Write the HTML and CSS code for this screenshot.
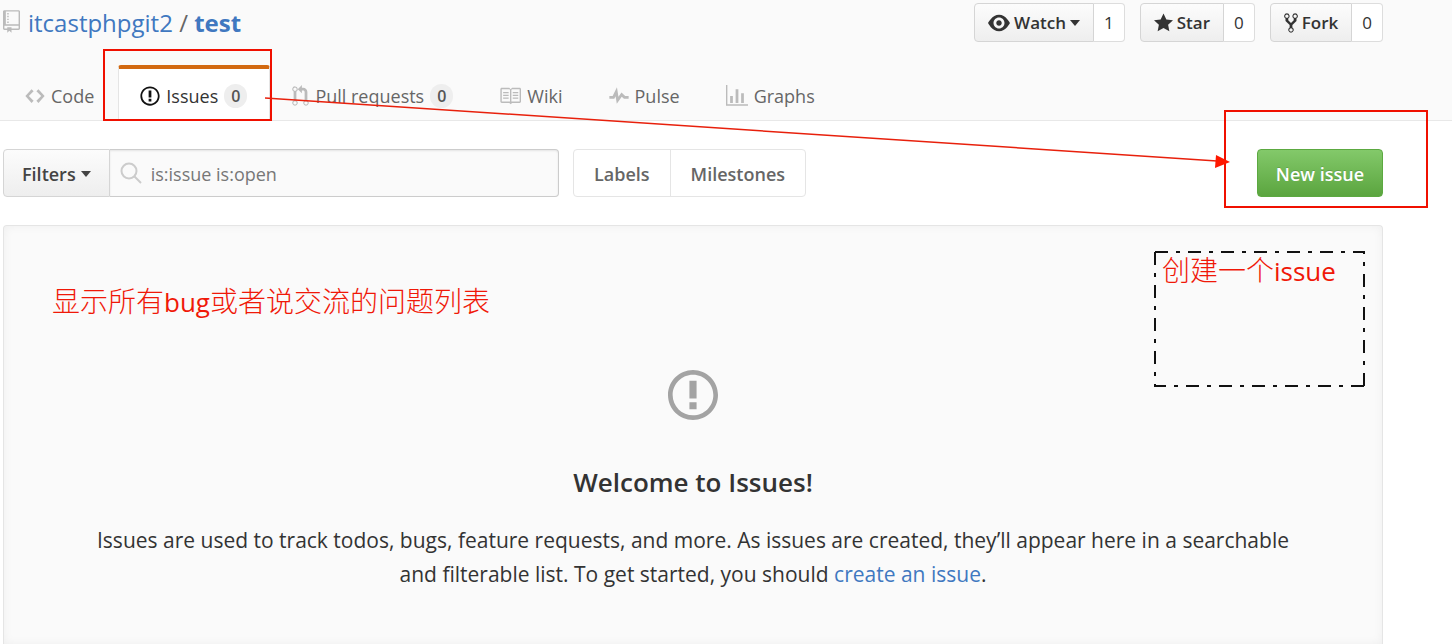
FILE: index.html
```html
<!DOCTYPE html>
<html lang="en">
<head>
<meta charset="utf-8">
<title>Issues · itcastphpgit2/test</title>
<link rel="stylesheet" href="styles.css">
</head>
<body>
<header class="repo-head">
  <div class="repo-bar">
    <h1 class="repo-title">
      <svg class="repo-icon" viewBox="0 0 12 16" width="17" height="23" aria-hidden="true"><path d="M4 9H3V8h1v1zm0-3H3v1h1V6zm0-2H3v1h1V4zm0-2H3v1h1V2zm8-1v12c0 .55-.45 1-1 1H6v2l-1.5-1.5L3 16v-2H1c-.55 0-1-.45-1-1V1c0-.55.45-1 1-1h10c.55 0 1 .45 1 1zm-1 10H1v2h2v-1h3v1h5v-2zm0-10H2v9h9V1z"/></svg>
      <span><a href="#">itcastphpgit2</a> / <a class="repo-name" href="#">test</a></span>
    </h1>
    <div class="repo-actions">
      <div class="social">
        <button class="social-btn" type="button"><svg viewBox="0 0 16 16" width="22" height="22" aria-hidden="true"><path d="M8.06 2C3 2 0 8 0 8s3 6 8.06 6C13 14 16 8 16 8s-3-6-7.94-6zM8 12c-2.2 0-4-1.78-4-4 0-2.2 1.8-4 4-4 2.22 0 4 1.8 4 4 0 2.22-1.78 4-4 4zm2-4c0 1.11-.89 2-2 2-1.11 0-2-.89-2-2 0-1.11.89-2 2-2 1.11 0 2 .89 2 2z"/></svg><span>Watch</span><i class="caret"></i></button>
        <a class="social-count" href="#">1</a>
      </div>
      <div class="social">
        <button class="social-btn" type="button"><svg viewBox="0 0 14 16" width="19" height="22" aria-hidden="true"><path d="M14 6l-4.900-.64L7 1 4.900 5.360 0 6l3.600 3.260L2.670 14 7 11.670 11.330 14l-.93-4.740z"/></svg><span>Star</span></button>
        <a class="social-count" href="#">0</a>
      </div>
      <div class="social">
        <button class="social-btn" type="button"><svg viewBox="0 0 10 16" width="14" height="22" aria-hidden="true"><path d="M8 1a1.993 1.993 0 0 0-1 3.72V6L5 8 3 6V4.720A1.993 1.993 0 0 0 2 1a1.993 1.993 0 0 0-1 3.720V6.500l3 3v1.780A1.993 1.993 0 0 0 5 15a1.993 1.993 0 0 0 1-3.720V9.500l3-3V4.720A1.993 1.993 0 0 0 8 1zM2 4.200C1.340 4.200.8 3.650.8 3c0-.65.55-1.200 1.200-1.200.65 0 1.200.55 1.200 1.200 0 .65-.55 1.200-1.200 1.200zm3 10c-.66 0-1.200-.55-1.200-1.200 0-.65.55-1.200 1.200-1.200.65 0 1.200.55 1.200 1.200 0 .65-.55 1.200-1.200 1.200zm3-10c-.66 0-1.200-.55-1.200-1.200 0-.65.55-1.200 1.200-1.200.65 0 1.200.55 1.200 1.200 0 .65-.55 1.200-1.200 1.200z"/></svg><span>Fork</span></button>
        <a class="social-count" href="#">0</a>
      </div>
    </div>
  </div>
  <nav class="tabs">
    <a class="tab" href="#"><svg viewBox="0 0 14 16" width="20" height="22" aria-hidden="true"><path d="M9.500 3L8 4.500 11.500 8 8 11.500 9.500 13 14 8 9.500 3zm-5 0L0 8l4.500 5L6 11.500 2.500 8 6 4.500 4.500 3z"/></svg><span>Code</span></a>
    <a class="tab tab-current" href="#" aria-current="page"><svg viewBox="0 0 14 16" width="20" height="22" aria-hidden="true"><path d="M7 2.300c3.140 0 5.700 2.560 5.700 5.700s-2.560 5.700-5.700 5.700A5.710 5.710 0 0 1 1.300 8c0-3.140 2.560-5.700 5.700-5.700zM7 1C3.140 1 0 4.140 0 8s3.140 7 7 7 7-3.140 7-7-3.140-7-7-7zm1 3H6v5h2V4zm0 6H6v2h2v-2z"/></svg><span>Issues</span><span class="counter">0</span></a>
    <a class="tab" href="#"><svg viewBox="0 0 12 16" width="17" height="22" aria-hidden="true"><path d="M11 11.280V5c-.03-.78-.34-1.470-.94-2.060C9.460 2.350 8.780 2.030 8 2H7V0L4 3l3 3V4h1c.27.02.48.11.69.31.21.2.3.42.31.69v6.280A1.993 1.993 0 0 0 10 15a1.993 1.993 0 0 0 1-3.720zm-1 2.920c-.66 0-1.200-.55-1.200-1.200 0-.65.55-1.200 1.200-1.200.65 0 1.200.55 1.200 1.200 0 .65-.55 1.200-1.200 1.200zM4 3c0-1.110-.89-2-2-2a1.993 1.993 0 0 0-1 3.720v6.560A1.993 1.993 0 0 0 2 15a1.993 1.993 0 0 0 1-3.720V4.720c.59-.34 1-.98 1-1.720zm-.8 10c0 .66-.55 1.200-1.200 1.200-.65 0-1.200-.55-1.200-1.200 0-.65.55-1.200 1.200-1.200.65 0 1.200.55 1.200 1.200zM2 4.200C1.340 4.200.8 3.650.8 3c0-.65.55-1.200 1.200-1.200.65 0 1.200.55 1.200 1.200 0 .65-.55 1.200-1.200 1.200z"/></svg><span>Pull requests</span><span class="counter">0</span></a>
    <a class="tab" href="#"><svg viewBox="0 0 16 16" width="22" height="22" aria-hidden="true"><path d="M3 5h4v1H3V5zm0 3h4V7H3v1zm0 2h4V9H3v1zm11-5h-4v1h4V5zm0 2h-4v1h4V7zm0 2h-4v1h4V9zm2-6v9c0 .55-.45 1-1 1H9.500l-1 1-1-1H2c-.55 0-1-.45-1-1V3c0-.55.45-1 1-1h5.500l1 1 1-1H15c.55 0 1 .45 1 1zm-8 .5L7.500 3H2v9h6V3.500zm7-.5H9.500l-.5.5V12h6V3z"/></svg><span>Wiki</span></a>
    <a class="tab" href="#"><svg viewBox="0 0 14 16" width="20" height="22" aria-hidden="true"><path d="M11.500 8L8.800 5.400 6.600 8.500 5.500 1.600 2.380 8H0v2h3.600l.9-1.800.9 5.400L9 8.500l1.600 1.500H14V8h-2.500z"/></svg><span>Pulse</span></a>
    <a class="tab" href="#"><svg viewBox="0 0 16 16" width="22" height="22" aria-hidden="true"><path d="M16 14v1H0V0h1v14h15zM5 13H3V8h2v5zm4 0H7V3h2v10zm4 0h-2V6h2v7z"/></svg><span>Graphs</span></a>
  </nav>
</header>

<main class="content">
  <div class="toolbar">
    <form class="search">
      <button class="filters" type="button">Filters<i class="caret"></i></button>
      <label class="search-box">
        <svg viewBox="0 0 22 22" width="22" height="22" aria-hidden="true"><circle cx="9" cy="9" r="7.500"/><path d="M14.500 14.500L21 21"/></svg>
        <input type="text" value="is:issue is:open" aria-label="Search issues">
      </label>
    </form>
    <div class="subnav">
      <a href="#">Labels</a>
      <a href="#">Milestones</a>
    </div>
    <button class="new-issue" type="button">New issue</button>
  </div>

  <section class="blank">
    <svg class="blank-icon" viewBox="0 0 14 14" width="50" height="50" aria-hidden="true"><path d="M7 1.300c3.140 0 5.700 2.560 5.700 5.700s-2.560 5.700-5.700 5.700A5.710 5.710 0 0 1 1.300 7c0-3.140 2.560-5.700 5.700-5.700zM7 0C3.140 0 0 3.140 0 7s3.140 7 7 7 7-3.140 7-7-3.140-7-7-7zm1 3H6v5h2V3zm0 6H6v2h2V9z"/></svg>
    <h2>Welcome to Issues!</h2>
    <p>Issues are used to track todos, bugs, feature requests, and more. As issues are created, they’ll appear here in a searchable and filterable list. To get started, you should <a href="#">create an issue</a>.</p>
  </section>
</main>

<div class="mark mark-tab"></div>
<div class="mark mark-new"></div>
<svg class="arrow" viewBox="0 0 966 80" width="966" height="80" aria-hidden="true"><path class="arrow-line" d="M0 7L952 70"/><path class="arrow-head" d="M951 64L965 71L950 77z"/></svg>
<p class="note note-list" lang="zh">显示所有<span class="latin">bug</span>或者说交流的问题列表</p>
<div class="note-frame">
  <svg width="211" height="136" aria-hidden="true"><path d="M1 1H210V135M1 1V135H210"/></svg>
  <p class="note" lang="zh">创建一个<span class="latin">issue</span></p>
</div>
</body>
</html>
```
FILE: styles.css
```css
* { box-sizing: border-box; }

body {
  position: relative;
  display: flex;
  flex-direction: column;
  min-height: 100vh;
  margin: 0;
  overflow-x: hidden;
  background: #fff;
  color: #333;
  font: 18px/24px "Open Sans", "Noto Sans", "Noto Sans CJK SC", sans-serif;
}

a { color: #4078c0; text-decoration: none; }
button, input { font: inherit; color: inherit; }
button { cursor: pointer; }
svg { display: block; flex: none; fill: currentColor; }

.caret {
  border: 5px solid transparent;
  border-top: 6px solid currentColor;
  border-bottom: 0;
}

/* Repository header */
.repo-head {
  padding: 3px 69px 0 3px;
  border-bottom: 1px solid #e8e8e8;
  background: #fafafa;
}

.repo-bar { display: flex; justify-content: space-between; height: 62px; }

.repo-title {
  display: flex;
  gap: 8px;
  margin: 0;
  font-size: 24px;
  font-weight: 400;
  line-height: 40px;
  color: #666;
}
.repo-icon { margin-top: 7px; color: #bbb; }
.repo-name { font-weight: 700; }

.repo-actions { display: flex; align-items: flex-start; gap: 15px; }
.social { display: flex; height: 39px; font-size: 17px; font-weight: 600; }
.social-btn {
  display: flex;
  align-items: center;
  gap: 4px;
  padding: 0 13px;
  border: 1px solid #d5d5d5;
  border-radius: 4px 0 0 4px;
  background: linear-gradient(#fcfcfc, #eee);
}
.social-count {
  display: flex;
  align-items: center;
  padding: 0 10px;
  border: 1px solid #ddd;
  border-left: 0;
  border-radius: 0 4px 4px 0;
  background: #fff;
  color: #333;
  font-weight: 400;
}

/* Tabs */
.tabs { display: flex; height: 55px; }
.tab {
  display: flex;
  align-items: center;
  gap: 6px;
  padding: 6px 24px 0 22px;
  color: #666;
}
.tab svg { color: #bbb; }
.tab-current {
  height: 56px;
  padding: 2px 22px 0 21px;
  border: 1px solid #e5e5e5;
  border-top: 4px solid #d26911;
  border-bottom: 0;
  border-radius: 3px 3px 0 0;
  background: #fff;
  color: #333;
}
.tab-current svg { color: #111; }
.counter {
  padding: 0 7px;
  border-radius: 12px;
  background: #eee;
  color: #555;
  font-size: 16px;
  font-weight: 600;
}

/* Toolbar */
.content {
  display: flex;
  flex: 1;
  flex-direction: column;
  gap: 28px;
  padding: 28px 69px 0 3px;
}
.toolbar { display: flex; height: 48px; }
.search { display: flex; flex: 0 1 556px; }
.filters {
  display: flex;
  align-items: center;
  gap: 5px;
  padding: 2px 18px 0;
  border: 1px solid #d5d5d5;
  border-radius: 4px 0 0 4px;
  background: linear-gradient(#fcfcfc, #eee);
  color: #444;
  font-weight: 600;
}
.search-box {
  display: flex;
  flex: 1;
  align-items: center;
  gap: 9px;
  padding: 0 10px;
  border: 1px solid #ccc;
  border-left: 0;
  border-radius: 0 4px 4px 0;
  background: #fafafa;
  box-shadow: inset 0 1px 2px #e4e4e4;
}
.search-box svg { fill: none; stroke: #ccc; stroke-width: 2; }
.search-box input {
  flex: 1;
  min-width: 0;
  padding: 2px 0 0;
  border: 0;
  outline: 0;
  background: none;
  color: #777;
}
.subnav {
  display: flex;
  margin-left: 14px;
  border: 1px solid #e5e5e5;
  border-radius: 4px;
}
.subnav a {
  display: flex;
  align-items: center;
  padding: 2px 20px 0;
  color: #666;
  font-weight: 600;
}
.subnav a + a { border-left: 1px solid #e5e5e5; }
.new-issue {
  margin-left: auto;
  padding: 2px 18px 0;
  border: 1px solid #5ca941;
  border-radius: 4px;
  background: linear-gradient(#83c96a, #5ba53f);
  color: #fff;
  font-weight: 600;
  text-shadow: 0 -1px 0 rgba(0, 0, 0, 0.15);
}

/* Empty state */
.blank {
  display: flex;
  flex: 1;
  flex-direction: column;
  align-items: center;
  padding: 144px 80px 50px;
  border: 1px solid #e5e5e5;
  border-bottom: 0;
  border-radius: 4px 4px 0 0;
  background: #fafafa;
  box-shadow: inset 0 0 10px rgba(0, 0, 0, 0.05);
  text-align: center;
}
.blank-icon { color: #a3a3a3; }
.blank h2 {
  margin: 42px 0 21px;
  font-size: 26px;
  font-weight: 600;
  line-height: 40px;
}
.blank p { margin: 0; font-size: 21px; line-height: 34px; }

/* Annotations lying over the page */
.mark { position: absolute; border: 2px solid #f01000; }
.mark-tab { top: 49px; left: 103px; width: 169px; height: 72px; }
.mark-new { top: 110px; left: 1224px; width: 204px; height: 98px; }

.arrow { position: absolute; top: 91px; left: 265px; }
.arrow-line { fill: none; stroke: #e8200c; stroke-width: 1.5; }
.arrow-head { fill: #ff1800; }

.note {
  margin: 0;
  color: #f01808;
  font: 300 28px/36px "Noto Sans CJK SC", sans-serif;
  white-space: nowrap;
}
.latin { font-family: "Open Sans", sans-serif; font-size: 26px; font-weight: 400; }
.note-list { position: absolute; top: 282px; left: 52px; }
.note-frame { position: absolute; top: 251px; left: 1154px; width: 211px; height: 136px; }
.note-frame svg {
  position: absolute;
  inset: 0;
  fill: none;
  stroke: #111;
  stroke-width: 2;
  stroke-dasharray: 13 8 4 8;
}
.note-frame .note { padding-left: 8px; }
```
